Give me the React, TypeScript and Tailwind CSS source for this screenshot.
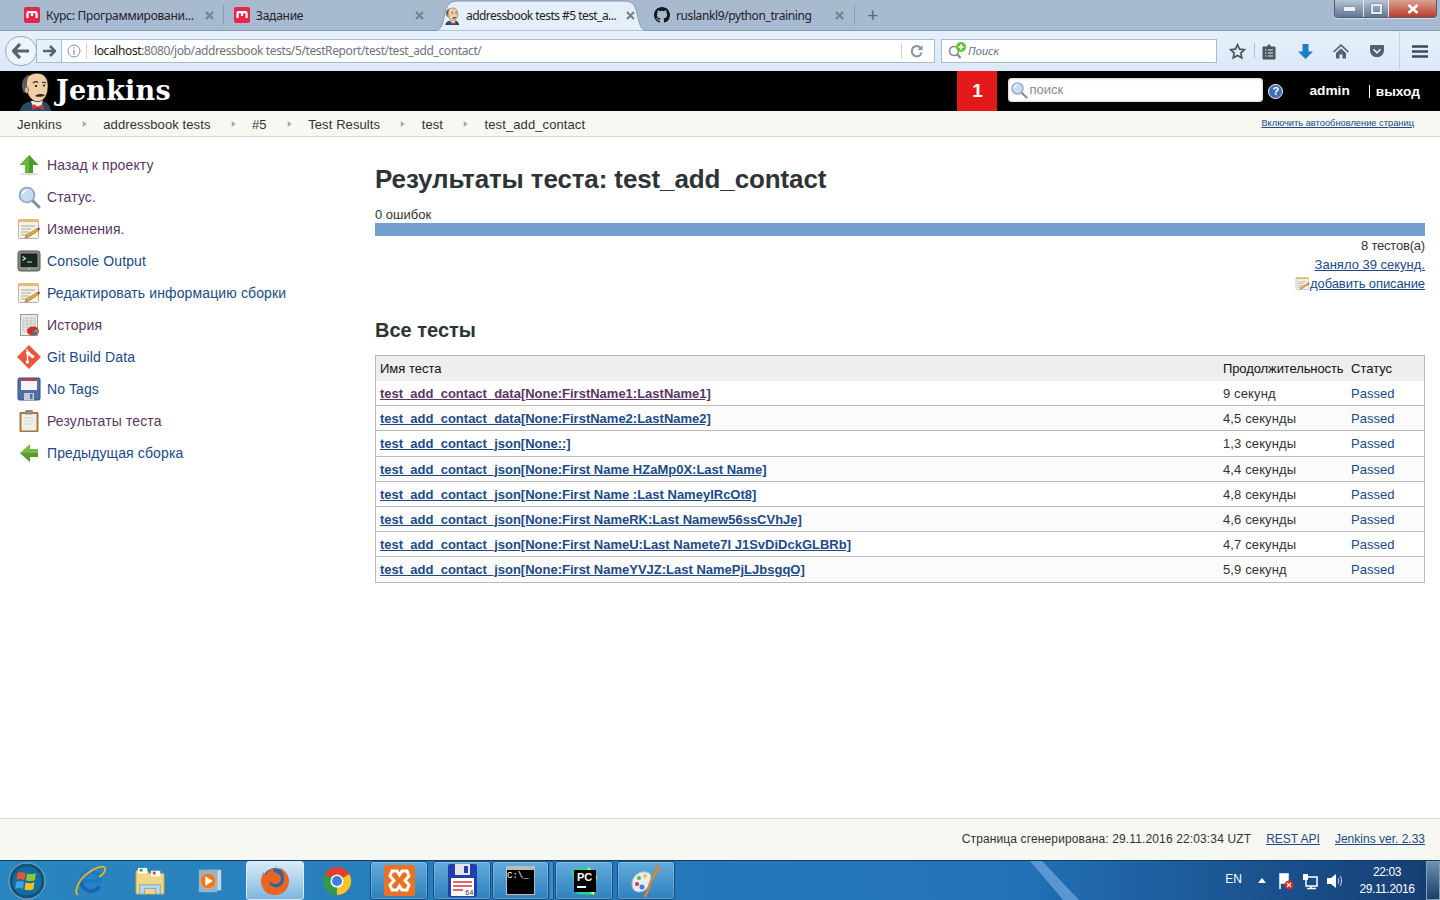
import React from "react";

const sans = "font-['Liberation_Sans',Arial,sans-serif]";

function RedM() {
  return (
    <svg width="16" height="16" viewBox="0 0 16 16" className="shrink-0">
      <rect width="16" height="16" rx="2" fill="#e8264a" />
      <path d="M3.5 11V6.2c0-.6.4-1 1-1h6.5c1 0 1.6.6 1.6 1.6V11M8 5.5V9" fill="none" stroke="#fff" strokeWidth="2.2" />
    </svg>
  );
}

function Butler({ w = 34, h = 40 }: { w?: number; h?: number }) {
  return (
    <svg width={w} height={h} viewBox="0 0 34 40" className="shrink-0">
      <path d="M2 40c1-7 7-9 12-10h10c5 1 8 4 9 10z" fill="#2a4a64" />
      <path d="M13 30l12-1-2 7h-8z" fill="#eee" />
      <path d="M15 33l5 2.5 5-2.5 1 6-6-2.200L14 39z" fill="#d33833" />
      <path d="M8 8c3-5 9-6.5 14-5.5 6 1.500 8 7 8 12 0 7-2 12-6 15-4 2.500-9 1-12-3-3-4-6-12-4-18.500z" fill="#f0cfa8" stroke="#2a2320" strokeWidth="0.8" />
      <path d="M6 22C2 15 4 6 11 3.5 9 8 8.500 13 9 18l-1 2z" fill="#5c5a5c" />
      <ellipse cx="8.5" cy="19" rx="2" ry="3.2" fill="#e6b48e" stroke="#2a2320" strokeWidth="0.5" />
      <path d="M15 12c2-1.500 4-1.500 5-.5M24 11.500c1.500-.5 3-.3 4 .5" fill="none" stroke="#3a2a22" strokeWidth="1.1" />
      <ellipse cx="18" cy="15" rx="1.3" ry="1" fill="#231f20" />
      <ellipse cx="26" cy="14.5" rx="1.2" ry="1" fill="#231f20" />
      <path d="M17 25c3-2.500 7-2.500 10-1-2 2-7 2.500-10 1z" fill="#3a2a22" />
    </svg>
  );
}

function CloseX() {
  return (
    <svg width="9" height="9" viewBox="0 0 9 9" className="shrink-0">
      <path d="M1 1l7 7M8 1L1 8" stroke="#76828e" strokeWidth="2.2" />
    </svg>
  );
}

function TabText({ children, track }: { children: React.ReactNode; track: string }) {
  return <span className={`ml-[6px] flex-1 whitespace-nowrap pt-px text-[12px] text-[#1f2328] ${track}`}>{children}</span>;
}

function TBtn({ children, w }: { children: React.ReactNode; w: string }) {
  return <div className={`flex ${w} items-center justify-center`}>{children}</div>;
}

function UpArrow() {
  return (
    <svg width="24" height="24" viewBox="0 0 24 24">
      <ellipse cx="12" cy="21" rx="9" ry="1.5" fill="#ddd" />
      <path d="M12 2l9.500 10H16v8H8v-8H2.500z" fill="#6db33f" />
      <path d="M12 2l9.500 10H16v8h-4z" fill="#4e9a2a" />
    </svg>
  );
}
function LeftArrow() {
  return (
    <svg width="24" height="24" viewBox="0 0 24 24">
      <path d="M3 12l10-9v5h8v8h-8v5z" fill="#7ab648" />
      <path d="M3 12l10 9v-5h8v-4z" fill="#5a9a2f" />
    </svg>
  );
}
function Magnifier({ s = 24 }: { s?: number }) {
  return (
    <svg width={s} height={s} viewBox="0 0 24 24">
      <path d="M15 15l7 7" stroke="#8a8f94" strokeWidth="3" strokeLinecap="round" />
      <circle cx="10" cy="10" r="7.5" fill="#c5dcf2" stroke="#8fa3b8" strokeWidth="1.6" />
      <path d="M5.500 9c.6-2.400 2.200-3.600 4.500-3.800" fill="none" stroke="#fff" strokeWidth="1.5" />
    </svg>
  );
}
function Notepad({ s = 24 }: { s?: number }) {
  return (
    <svg width={s} height={s} viewBox="0 0 24 24">
      <rect x="1.5" y="3" width="20" height="18.5" rx="1" fill="#f3f3ea" stroke="#b5b5a8" />
      <rect x="1.5" y="2" width="20" height="3" fill="#e0c070" />
      <path d="M4 9h14M4 12h10M4 15h8M4 18h6" stroke="#a9a9a0" strokeWidth="1" />
      <path d="M9 18l12-7 1.500 2-11.500 7.500-3 .5z" fill="#e0a63a" stroke="#8a6420" strokeWidth="0.5" />
      <path d="M20 11.500l2-1.200 1 1.800-1.800 1.200z" fill="#d33833" />
    </svg>
  );
}
function Terminal() {
  return (
    <svg width="24" height="24" viewBox="0 0 24 24">
      <rect x="1" y="2" width="22" height="20" rx="2.5" fill="#8b8e86" stroke="#55574f" />
      <rect x="3.5" y="4.5" width="17" height="13.5" fill="#17281c" />
      <path d="M5.500 7.500l3 2-3 2M10 13h5" fill="none" stroke="#d7e4d7" strokeWidth="1.2" />
      <circle cx="12" cy="20" r="0.8" fill="#ddd" />
    </svg>
  );
}
function History() {
  return (
    <svg width="24" height="24" viewBox="0 0 24 24">
      <rect x="3.5" y="1.5" width="17" height="21" fill="#e9e9e6" stroke="#9d9d98" />
      <path d="M6 5h12v13H6zM6 8h12M6 11h12M6 14h12M10 5v13M14 5v13" fill="none" stroke="#bcbcb8" strokeWidth="0.8" />
      <ellipse cx="16" cy="18" rx="6" ry="4.5" fill="#c8322d" />
      <path d="M16 18l5-2c1 2 .5 3-1 4z" fill="#6aa84f" />
      <path d="M16 18l4 2c-1 1.500-3 2-5 1.800z" fill="#3d6fb4" />
    </svg>
  );
}
function GitIcon() {
  return (
    <svg width="24" height="24" viewBox="0 0 24 24">
      <path d="M12 0l12 12-12 12L0 12z" fill="#e8583c" />
      <path d="M9 4.500l6.500 6.500M10.500 8v9M11 9.500l4.500 2" stroke="#fff" strokeWidth="1.4" fill="none" />
      <circle cx="10.5" cy="8" r="1.7" fill="#fff" />
      <circle cx="10.5" cy="17" r="1.7" fill="#fff" />
      <circle cx="15.5" cy="11.5" r="1.7" fill="#fff" />
    </svg>
  );
}
function Floppy() {
  return (
    <svg width="24" height="24" viewBox="0 0 24 24">
      <rect x="1" y="1" width="22" height="22" rx="1.5" fill="#4f6fa8" stroke="#32507f" />
      <rect x="4" y="2" width="16" height="11" fill="#f4f4f4" />
      <rect x="4" y="2" width="16" height="2" fill="#d33833" />
      <rect x="7" y="16" width="10" height="7" fill="#c7ccd4" />
      <rect x="13" y="17" width="2.5" height="5" fill="#4f6fa8" />
    </svg>
  );
}
function Clipboard() {
  return (
    <svg width="24" height="24" viewBox="0 0 24 24">
      <rect x="2.5" y="3" width="19" height="20" rx="1" fill="#a8763a" />
      <rect x="4.5" y="5" width="15" height="16.5" fill="#efefec" />
      <path d="M7 9h10M7 12h10M7 15h8" stroke="#d6d6d0" strokeWidth="1" />
      <rect x="8" y="1" width="8" height="4.5" rx="1" fill="#8f8f88" />
    </svg>
  );
}

const sideItems: { icon: React.ReactNode; label: string; visited?: boolean }[] = [
  { icon: <UpArrow />, label: "Назад к проекту", visited: true },
  { icon: <Magnifier />, label: "Статус.", visited: true },
  { icon: <Notepad />, label: "Изменения.", visited: true },
  { icon: <Terminal />, label: "Console Output" },
  { icon: <Notepad />, label: "Редактировать информацию сборки" },
  { icon: <History />, label: "История", visited: true },
  { icon: <GitIcon />, label: "Git Build Data" },
  { icon: <Floppy />, label: "No Tags" },
  { icon: <Clipboard />, label: "Результаты теста", visited: true },
  { icon: <LeftArrow />, label: "Предыдущая сборка" },
];

const rows: { name: string; dur: string; h: string; visited?: boolean }[] = [
  { name: "test_add_contact_data[None:FirstName1:LastName1]", dur: "9 секунд", h: "h-[25px]", visited: true },
  { name: "test_add_contact_data[None:FirstName2:LastName2]", dur: "4,5 секунды", h: "h-[25px]" },
  { name: "test_add_contact_json[None::]", dur: "1,3 секунды", h: "h-[26px]" },
  { name: "test_add_contact_json[None:First Name HZaMp0X:Last Name]", dur: "4,4 секунды", h: "h-[25px]" },
  { name: "test_add_contact_json[None:First Name :Last NameyIRcOt8]", dur: "4,8 секунды", h: "h-[25px]" },
  { name: "test_add_contact_json[None:First NameRK:Last Namew56ssCVhJe]", dur: "4,6 секунды", h: "h-[25px]" },
  { name: "test_add_contact_json[None:First NameU:Last Namete7I J1SvDiDckGLBRb]", dur: "4,7 секунды", h: "h-[25px]" },
  { name: "test_add_contact_json[None:First NameYVJZ:Last NamePjLJbsgqO]", dur: "5,9 секунд", h: "h-[25px]" },
];

function Crumb({ label, last }: { label: string; last?: boolean }) {
  return (
    <>
      <span className="text-[13px] leading-none tracking-[0.1px] text-[#333]">{label}</span>
      {!last && (
        <svg width="41.5" height="10" viewBox="0 0 42 10" className="shrink-0">
          <path d="M21 2l4 3-4 3z" fill="#a9aca5" />
        </svg>
      )}
    </>
  );
}

function TaskBtn({ children, active, w = "w-[58px]" }: { children: React.ReactNode; active?: boolean; w?: string }) {
  return (
    <div
      className={
        active
          ? `flex h-[39px] ${w} shrink-0 items-center justify-center rounded-[3px] border border-[#dce9f4] bg-gradient-to-b from-[#d9ebf8] to-[#7cb6de]`
          : `flex h-[39px] ${w} shrink-0 items-center justify-center rounded-[3px] border border-[#174f84] bg-gradient-to-b from-[#62acdc] to-[#2f80bd] shadow-[inset_0_0_0_1px_rgba(255,255,255,0.2)]`
      }
    >
      {children}
    </div>
  );
}

export default function App() {
  return (
    <div className={`flex h-[900px] w-[1440px] flex-col overflow-hidden bg-white ${sans}`}>
      {/* tab strip */}
      <div className="relative flex h-[31px] shrink-0 items-end border-b border-[#8397ae] bg-gradient-to-b from-[#a8bace] to-[#a6bad2] pl-[14px] font-['Noto_Sans',sans-serif]">
        <div className="relative flex h-[30px] w-[210px] items-center pl-[10px] pr-[10px]">
          <RedM />
          <TabText track="tracking-[-0.25px]">Курс: Программировани...</TabText>
          <CloseX />
          <span className="absolute right-0 top-[5px] h-[20px] w-px bg-[#8a9cb0]" />
        </div>
        <div className="relative flex h-[30px] w-[210px] items-center pl-[10px] pr-[10px]">
          <RedM />
          <TabText track="tracking-[-0.25px]">Задание</TabText>
          <CloseX />
        </div>
        {/* active tab */}
        <div className="relative z-10 -mb-px flex h-[31px] w-[214px] items-center pl-[10px] pr-[13px]">
          <svg className="absolute left-0 top-0" width="214" height="31" viewBox="0 0 214 31">
            <path
              d="M0 31C8 31 9 22 11 13 13 4 16 1 24 1H190C198 1 201 4 203 13 205 22 206 31 214 31Z"
              fill="#e5effa"
              stroke="#8397ae"
              strokeWidth="1"
            />
          </svg>
          <div className="relative flex w-full items-center">
            <Butler w={16} h={18} />
            <TabText track="tracking-[-0.55px]">addressbook tests #5 test_a...</TabText>
            <CloseX />
          </div>
        </div>
        <div className="relative -ml-[4px] flex h-[30px] w-[211px] items-center pl-[10px] pr-[11px]">
          <svg width="16" height="16" viewBox="0 0 16 16" className="shrink-0">
            <path
              fill="#16181a"
              d="M8 0C3.58 0 0 3.58 0 8c0 3.54 2.29 6.53 5.47 7.59.4.07.55-.17.55-.38v-1.49c-2.01.37-2.53-.49-2.69-.94-.09-.23-.48-.94-.82-1.13-.28-.15-.68-.52-.01-.53.63-.01 1.08.58 1.23.82.72 1.21 1.87.87 2.33.66.07-.52.28-.87.51-1.07-1.78-.2-3.64-.89-3.64-3.95 0-.87.31-1.59.82-2.15-.08-.2-.36-1.02.08-2.12 0 0 .67-.21 2.2.82a7.4 7.4 0 014 0c1.53-1.04 2.2-.82 2.2-.82.44 1.1.16 1.92.08 2.12.51.56.82 1.27.82 2.15 0 3.07-1.87 3.75-3.65 3.95.29.25.54.73.54 1.48v2.2c0 .21.15.46.55.38A8 8 0 0016 8c0-4.42-3.58-8-8-8z"
            />
          </svg>
          <TabText track="tracking-[-0.4px]">ruslankl9/python_training</TabText>
          <CloseX />
          <span className="absolute right-0 top-[5px] h-[20px] w-px bg-[#8a9cb0]" />
        </div>
        <span className="ml-[12px] h-[30px] text-[20px] leading-[30px] text-[#5d6a78]">+</span>
        {/* window controls */}
        <div className="absolute right-[3px] top-0 flex h-[18px] w-[103px] overflow-hidden rounded-b-[4px] border border-t-0 border-[#4f5d6d] shadow-[0_1px_0_rgba(255,255,255,0.5)]">
          <div className="flex w-[28px] items-center justify-center bg-gradient-to-b from-[#b9c7d6] to-[#5f7692]">
            <span className="h-[4px] w-[11px] bg-[#eef1f5] shadow-[0_0_1px_#222]" />
          </div>
          <div className="flex w-[26px] items-center justify-center border-x border-[#e4e9ef] bg-gradient-to-b from-[#b9c7d6] to-[#5f7692]">
            <span className="h-[10px] w-[11px] border-2 border-[#e6eaef] shadow-[0_0_1px_#222]" />
          </div>
          <div className="flex flex-1 items-center justify-center bg-gradient-to-b from-[#d9a193] to-[#b8392c]">
            <svg width="12" height="10" viewBox="0 0 12 10">
              <path d="M1.5 1l9 8M10.500 1l-9 8" stroke="#fff" strokeWidth="2.6" />
            </svg>
          </div>
        </div>
      </div>

      {/* toolbar */}
      <div className="flex h-[40px] shrink-0 items-center bg-gradient-to-b from-[#e6f0fb] to-[#dbe8f7] pl-[5px]">
        <div className="z-10 flex h-[30px] w-[32px] shrink-0 items-center justify-center rounded-full border border-[#97aabf] bg-[#eef4fb]">
          <svg width="18" height="16" viewBox="0 0 18 16">
            <path d="M8 1L1.500 8 8 15M2 8h15" fill="none" stroke="#58636e" strokeWidth="3.2" />
          </svg>
        </div>
        <div className="-ml-px flex h-[24px] w-[26px] shrink-0 items-center justify-center border border-[#a9bccf] bg-[#e6f0fb]">
          <svg width="14" height="12" viewBox="0 0 14 12">
            <path d="M8 1l5 5-5 5M1 6h11" fill="none" stroke="#58636e" strokeWidth="2.6" />
          </svg>
        </div>
        <div className="-ml-px flex h-[24px] w-[874px] shrink-0 items-center border border-[#a9bccf] bg-white font-['Noto_Sans',sans-serif]">
          <svg width="14" height="14" viewBox="0 0 14 14" className="ml-[5px] shrink-0">
            <circle cx="7" cy="7" r="6" fill="none" stroke="#8a9198" />
            <path d="M7 6v4.500M7 3.200v1.400" stroke="#8a9198" strokeWidth="1.3" />
          </svg>
          <span className="ml-[5px] h-[16px] w-px bg-[#d2d6da]" />
          <span className="ml-[7px] flex-1 truncate text-[12px] tracking-[-0.39px] text-[#6f7479]">
            <span className="text-[#1a1a1a]">localhost</span>:8080/job/addressbook tests/5/testReport/test/test_add_contact/
          </span>
          <span className="h-[16px] w-px bg-[#d2d6da]" />
          <svg width="14" height="14" viewBox="0 0 14 14" className="ml-[8px] mr-[10px] shrink-0">
            <path d="M11.500 8.500A4.700 4.700 0 112 6.500 4.700 4.700 0 0110.500 4" fill="none" stroke="#8d959d" strokeWidth="2" />
            <path d="M12.500 1v5h-5z" fill="#8d959d" />
          </svg>
        </div>
        <div className="ml-[6px] flex h-[24px] w-[276px] shrink-0 items-center border border-[#a9bccf] bg-white pl-[6px] font-['Noto_Sans',sans-serif]">
          <svg width="20" height="18" viewBox="0 0 20 18" className="shrink-0">
            <circle cx="6" cy="9" r="4.5" fill="none" stroke="#7d8791" strokeWidth="1.5" />
            <path d="M9 12l3.500 4" stroke="#7d8791" strokeWidth="2" />
            <circle cx="13" cy="5" r="5" fill="#5fc42f" />
            <path d="M13 2.200v5.600M10.200 5h5.600" stroke="#fff" strokeWidth="1.5" />
          </svg>
          <span className="text-[11.5px] italic tracking-[-0.2px] text-[#6f7479]">Поиск</span>
        </div>
        <div className="ml-[3px] flex flex-1 items-center">
          <TBtn w="w-[34px]">
            <svg width="17" height="17" viewBox="0 0 18 18">
              <path d="M9 1.800l2.200 4.700 5 .6-3.700 3.500 1 5.100L9 13.200l-4.500 2.500 1-5.100L1.800 7.100l5-.6z" fill="none" stroke="#4a5560" strokeWidth="1.8" />
            </svg>
          </TBtn>
          <span className="h-[16px] w-px bg-[#b8c6d4]" />
          <TBtn w="w-[28px]">
            <svg width="14" height="17" viewBox="0 0 14 17">
              <path d="M1.500 3.500h3.300L7 1l2.200 2.500h3.300c.6 0 1 .4 1 1v11c0 .6-.4 1-1 1h-11c-.6 0-1-.4-1-1v-11c0-.6.4-1 1-1z" fill="#4a5560" />
              <path d="M3 7h1.500M6 7h5M3 10h1.500M6 10h5M3 13h1.500M6 13h5" stroke="#e6f0fb" strokeWidth="1.2" />
            </svg>
          </TBtn>
          <TBtn w="w-[44px]">
            <svg width="15" height="15" viewBox="0 0 15 15">
              <path d="M4.500 0h6v7.500H15L7.500 15 0 7.500h4.500z" fill="#1c7fc6" />
            </svg>
          </TBtn>
          <TBtn w="w-[28px]">
            <svg width="16" height="16" viewBox="0 0 16 16">
              <path d="M8 1L0 8.500l1.200 1L8 3.300l6.800 6.200 1.200-1z" fill="#56616c" />
              <path d="M3 10l5-4.500 5 4.500v5.500H9.500v-4h-3v4H3z" fill="#56616c" />
            </svg>
          </TBtn>
          <TBtn w="w-[44px]">
            <svg width="16" height="14" viewBox="0 0 18 16">
              <path d="M1 2.500C1 1.600 1.600 1 2.500 1h13c.9 0 1.500.6 1.500 1.500V7c0 4.500-3.500 8-8 8s-8-3.500-8-8z" fill="#56616c" />
              <path d="M5 6l4 4 4-4" fill="none" stroke="#e6f0fb" strokeWidth="2" />
            </svg>
          </TBtn>
          <div className="flex h-[40px] w-[41px] items-center justify-center border-l border-[#c5d2df]">
            <svg width="16" height="13" viewBox="0 0 16 13">
              <path d="M0 1.500h16M0 6.500h16M0 11.500h16" stroke="#3f4a55" strokeWidth="2.4" />
            </svg>
          </div>
        </div>
      </div>

      {/* jenkins header */}
      <div className="flex h-[40px] shrink-0 items-center bg-black">
        <div className="ml-[18px] flex h-[40px] w-[34px] items-end">
          <Butler />
        </div>
        <span className="ml-[4px] pb-[2px] font-['DejaVu_Serif',serif] text-[27px] font-bold leading-none tracking-[0.2px] text-white">Jenkins</span>
        <div className="ml-auto flex h-[40px] items-center">
          <div className="flex h-[40px] w-[40px] items-center justify-center bg-[#e41a1a] text-[19px] font-bold text-white">1</div>
          <div className="mb-[3px] ml-[11px] flex h-[24px] w-[255px] items-center rounded-[4px] bg-white pl-[2px] shadow-[inset_0_0_3px_#aaa]">
            <Magnifier s={18} />
            <span className="ml-px text-[13px] text-[#8a8a8a]">поиск</span>
          </div>
          <div className="ml-[5px] flex h-[15px] w-[15px] items-center justify-center rounded-full border border-white bg-[#3d6db0] text-[11px] font-bold leading-none text-white">
            ?
          </div>
          <span className="ml-[26px] text-[13.7px] font-bold text-white">admin</span>
          <span className="ml-[19px] border-l border-white pl-[6px] text-[13.7px] font-bold leading-[13px] text-white">выход</span>
          <span className="w-[20px]" />
        </div>
      </div>

      {/* breadcrumb */}
      <div className="flex h-[26px] shrink-0 items-center border-b border-[#d3d7cf] bg-[#f6f8f1] pl-[17px] pr-[26px] pt-px">
        <Crumb label="Jenkins" />
        <Crumb label="addressbook tests" />
        <Crumb label="#5" />
        <Crumb label="Test Results" />
        <Crumb label="test" />
        <Crumb label="test_add_contact" last />
        <span className="ml-auto text-[9.3px] leading-none text-[#204a87] underline">Включить автообновление страниц</span>
      </div>

      {/* content */}
      <div className="flex min-h-0 flex-1">
        <div className="w-[375px] shrink-0 pl-[17px] pt-[12px]">
          {sideItems.map((it) => (
            <div key={it.label} className="flex h-[32px] items-center">
              <span className="flex h-[24px] w-[24px] shrink-0 items-center justify-center">{it.icon}</span>
              <span className={`ml-[6px] text-[14px] leading-none tracking-[0.12px] ${it.visited ? "text-[#5c3566]" : "text-[#204a87]"}`}>{it.label}</span>
            </div>
          ))}
        </div>
        <div className="w-[1050px] shrink-0 pt-[25px]">
          <h1 className="text-[26px] font-bold leading-[34px] tracking-[-0.12px] text-[#2e3436]">Результаты теста: test_add_contact</h1>
          <div className="mt-[11px] h-[16px] text-[13px] leading-[16px] text-[#333]">0 ошибок</div>
          <div className="h-[13px] bg-[#729fcf]" />
          <div className="text-right text-[13px] leading-[19px] text-[#333]">
            <div className="tracking-[-0.2px]">8 тестов(а)</div>
            <div className="text-[#204a87] underline">Заняло 39 секунд.</div>
            <div className="flex h-[18px] items-center justify-end">
              <Notepad s={15} />
              <span className="tracking-[-0.1px] text-[#204a87] underline">добавить описание</span>
            </div>
          </div>
          <h2 className="mt-[25px] text-[20px] font-bold leading-[26px] text-[#2e3436]">Все тесты</h2>
          <div className="mt-[12px] border border-[#bbb] text-[13px]">
            <div className="flex h-[25px] items-center bg-[#eee] text-[#111]">
              <div className="w-[843px] pl-1">Имя теста</div>
              <div className="w-[128px] pl-1 tracking-[-0.1px]">Продолжительность</div>
              <div className="pl-1">Статус</div>
            </div>
            {rows.map((r, i) => (
              <div
                key={r.name}
                className={`flex items-center pt-px ${r.h} ${i < rows.length - 1 ? "border-b border-[#bbb]" : ""} ${i % 2 === 1 ? "bg-[#fbfbfb]" : "bg-white"}`}
              >
                <div className={`w-[843px] pl-1 font-bold underline ${r.visited ? "text-[#5c3566]" : "text-[#204a87]"}`}>{r.name}</div>
                <div className="w-[128px] pl-1 tracking-[0.12px] text-[#333]">{r.dur}</div>
                <div className="pl-1 text-[#204a87]">Passed</div>
              </div>
            ))}
          </div>
        </div>
      </div>

      {/* footer */}
      <div className="flex h-[42px] shrink-0 items-center justify-end gap-[15px] border-t border-[#d3d7cf] bg-[#f6f8f1] pb-[2px] pr-[15px] text-[12px] text-[#333]">
        <span className="tracking-[0.13px]">Страница сгенерирована: 29.11.2016 22:03:34 UZT</span>
        <span className="text-[#204a87] underline">REST API</span>
        <span className="text-[#204a87] underline">Jenkins ver. 2.33</span>
      </div>

      {/* taskbar */}
      <div className="relative flex h-[40px] shrink-0 items-center border-t border-[#123a5f] bg-gradient-to-r from-[#2a86bf] via-[#2272b8] via-70% to-[#153d72] pl-[8px] text-white">
        <svg className="absolute left-[1020px] top-0" width="70" height="40" viewBox="0 0 70 40">
          <path d="M10 0h12l38 40H44z" fill="#7fb4e6" opacity="0.6" />
        </svg>
        {/* start orb */}
        <svg width="38" height="38" viewBox="0 0 38 38" className="relative shrink-0">
          <circle cx="19" cy="19" r="18" fill="#174f78" stroke="#9cc2d8" strokeWidth="0.8" />
          <circle cx="19" cy="19" r="14.5" fill="#0e6e9c" />
          <path d="M9.500 11c3-1.500 5-1 8 0l-1 7c-3-1-5-1.500-8 0z" fill="#e8562a" />
          <path d="M19 11.500c3 1 5 1 9-.5l-1 7c-3 1.500-6 1.500-9 .5z" fill="#8cc63f" />
          <path d="M8 20c3-1.500 5-1 8 0l-1 7c-3-1-5-1.500-8 0z" fill="#3f9fe0" />
          <path d="M17.500 20.500c3 1 6 1 9-.5l-1 7c-3 1.500-6 1.500-9 .5z" fill="#f4c020" />
        </svg>
        <div className="relative ml-[24px] flex w-[40px] shrink-0 justify-center">
          <svg width="32" height="32" viewBox="0 0 32 32">
            <path d="M7 16a9.500 9.500 0 0119 0H7z" fill="none" stroke="#1e78c8" strokeWidth="4" />
            <path d="M7 16.500h17" stroke="#1e78c8" strokeWidth="3" />
            <path d="M7 15c0 7 5 11 10 11 4 0 7-2 8.500-5" fill="none" stroke="#1a65b5" strokeWidth="4" />
            <path d="M4 30C-1 28 5 14 14 8 22 2 30 0 31 3c1 3-3 7-6 9" fill="none" stroke="#e6b422" strokeWidth="1.8" />
          </svg>
        </div>
        <div className="relative ml-[20px] flex w-[40px] shrink-0 justify-center">
          <svg width="30" height="28" viewBox="0 0 32 30">
            <path d="M1 4h12l2 3h16v22H1z" fill="#f1d785" stroke="#c9a84a" />
            <rect x="3" y="1" width="10" height="6" fill="#fff" />
            <rect x="5" y="2" width="3" height="3" fill="#46a548" />
            <rect x="17" y="4" width="10" height="6" fill="#fff" />
            <rect x="19" y="5" width="3" height="3" fill="#d9412c" />
            <path d="M5 29V19h22v10h-5v-6H10v6z" fill="#b7d7ea" stroke="#7ea6bf" />
          </svg>
        </div>
        <div className="relative ml-[23px] flex w-[34px] shrink-0 justify-center">
          <svg width="28" height="28" viewBox="0 0 30 30">
            <rect x="10" y="3" width="17" height="22" fill="#c6d6e4" />
            <rect x="3" y="3" width="20" height="24" fill="#8fb3d2" />
            <circle cx="13" cy="15" r="8.5" fill="#ea7a22" stroke="#f0b070" />
            <path d="M10 10l8 5-8 5z" fill="#fff" />
          </svg>
        </div>
        <div className="relative ml-[19px]">
          <TaskBtn active>
            <svg width="32" height="32" viewBox="0 0 32 32">
              <circle cx="16" cy="15" r="12" fill="#2d64a8" />
              <path d="M16 2C24 2 30 9 30 16c0 8-6 14-14 14C8 30 2 24 2 16c0-4 2-8 3-9 0 2 1 3 2 3 1-3 4-6 8-7-1 2-1 3 0 4 4 1 7 3 7 7 0 3-3 5-6 5-2 0-4-1-5-3-1 1 0 5 4 6 5 1 10-2 10-8 0-6-3-11-9-13z" fill="#e8641f" />
            </svg>
          </TaskBtn>
        </div>
        <div className="relative ml-[13px] flex w-[40px] shrink-0 justify-center">
          <svg width="30" height="30" viewBox="0 0 32 32">
            <circle cx="16" cy="16" r="15" fill="#e0402f" />
            <path d="M16 16L3 8.500A15 15 0 0016 31z" fill="#2c9e4b" />
            <path d="M16 16V31A15 15 0 0029 8.500z" fill="#f6c527" />
            <path d="M16 16L3 8.500A15 15 0 0129 8.500z" fill="#e0402f" />
            <circle cx="16" cy="16" r="7" fill="#fff" />
            <circle cx="16" cy="16" r="5.3" fill="#3f7de0" />
          </svg>
        </div>
        <div className="relative ml-[13px]">
          <TaskBtn>
            <svg width="31" height="31" viewBox="0 0 31 31">
              <rect width="31" height="31" rx="2" fill="#ea7225" />
              <path d="M8 6h5l2.500 4L18 6h5l2 5-4 4.500 4 4.500-2 5h-5l-2.500-4-2.500 4H8l-2-5 4-4.500L6 11z" fill="none" stroke="#fff" strokeWidth="3" />
            </svg>
          </TaskBtn>
        </div>
        <div className="relative ml-[5px]">
          <TaskBtn>
            <svg width="31" height="33" viewBox="0 0 31 33">
              <rect x="1" y="0" width="29" height="33" rx="2" fill="#1f3fae" />
              <rect x="8" y="0" width="15" height="11" fill="#e6e6e6" />
              <rect x="17" y="2" width="4" height="7" fill="#1f3fae" />
              <rect x="4" y="14" width="23" height="18" fill="#fff" />
              <path d="M6 18h19M6 22h19M6 26h10" stroke="#d33833" strokeWidth="1.5" />
              <text x="18" y="31" fill="#333" fontSize="7" fontFamily="Liberation Mono">64</text>
            </svg>
          </TaskBtn>
        </div>
        <div className="relative ml-px flex">
          <TaskBtn w="w-[57px]">
            <div className="h-[29px] w-[29px] border border-t-[4px] border-[#bbb] bg-black font-['Liberation_Mono',monospace] text-[9px] leading-[12px] text-white">C:\_</div>
          </TaskBtn>
          <span className="ml-px h-[39px] w-[4px] rounded-r-[2px] border border-l-0 border-[#174f84] bg-[#3b8cc7]" />
        </div>
        <div className="relative ml-px">
          <TaskBtn>
            <svg width="32" height="32" viewBox="0 0 32 32">
              <path d="M3 5l17-3 9 9-3 19-17-1z" fill="#21d789" />
              <path d="M20 2l9 9-3 19-8-6z" fill="#fcf84a" />
              <rect x="6" y="5" width="22" height="22" fill="#000" />
              <rect x="9" y="21" width="9" height="2" fill="#fff" />
              <text x="9" y="16" fill="#fff" fontSize="11" fontWeight="700" fontFamily="Liberation Sans">PC</text>
            </svg>
          </TaskBtn>
        </div>
        <div className="relative ml-[4px]">
          <TaskBtn>
            <svg width="34" height="34" viewBox="0 0 34 34">
              <path d="M3 20C3 12 10 7 17 8c3 .5 5 2 5 5-1 9-5 15-12 15-4 0-7-3-7-8z" fill="#e7edf3" stroke="#aebccb" />
              <circle cx="8" cy="20" r="2" fill="#d33833" />
              <circle cx="10" cy="14" r="2" fill="#5fb04a" />
              <circle cx="16" cy="12" r="2" fill="#f2c037" />
              <circle cx="13" cy="23" r="2.5" fill="#3f7de0" />
              <path d="M30 2l-7 13-7 18" fill="none" stroke="#d9852b" strokeWidth="2.5" />
              <path d="M27 1l5 2-3 7-4-2z" fill="#b98a55" />
            </svg>
          </TaskBtn>
        </div>

        <div className="relative ml-auto flex h-full items-center">
          <span className="mb-[4px] text-[12px] text-white">EN</span>
          <svg width="8" height="5" viewBox="0 0 8 5" className="ml-[16px]">
            <path d="M4 0l4 5H0z" fill="#fff" />
          </svg>
          <svg width="18" height="18" viewBox="0 0 18 18" className="ml-[11px]">
            <path d="M3 1v16M3 2h8v9H3" fill="#fff" stroke="#fff" strokeWidth="1.5" />
            <circle cx="12" cy="13" r="4.5" fill="#d9261c" />
            <path d="M10 11l4 4M14 11l-4 4" stroke="#fff" strokeWidth="1.2" />
          </svg>
          <svg width="18" height="18" viewBox="0 0 18 18" className="ml-[6px]">
            <rect x="5" y="5" width="11" height="9" fill="none" stroke="#fff" strokeWidth="1.5" />
            <rect x="2" y="2" width="5" height="6" fill="#fff" />
            <path d="M10 14v2M6 16.500h9" stroke="#fff" strokeWidth="1.5" />
          </svg>
          <svg width="18" height="18" viewBox="0 0 18 18" className="ml-[7px]">
            <path d="M1 6h4l5-4v14l-5-4H1z" fill="#fff" />
            <path d="M12 6c1 1.500 1 4.500 0 6M14 4c2 3 2 7 0 10" fill="none" stroke="#d4e3f2" strokeWidth="1" />
          </svg>
          <div className="ml-[13px] flex w-[60px] flex-col items-center text-[12px] leading-[17px] tracking-[-0.4px] text-white">
            <span>22:03</span>
            <span>29.11.2016</span>
          </div>
          <div className="ml-[9px] h-full w-[14px] border border-[#7ea0bd] bg-gradient-to-b from-[#6e8fae] to-[#1a3f68]" />
        </div>
      </div>
    </div>
  );
}
